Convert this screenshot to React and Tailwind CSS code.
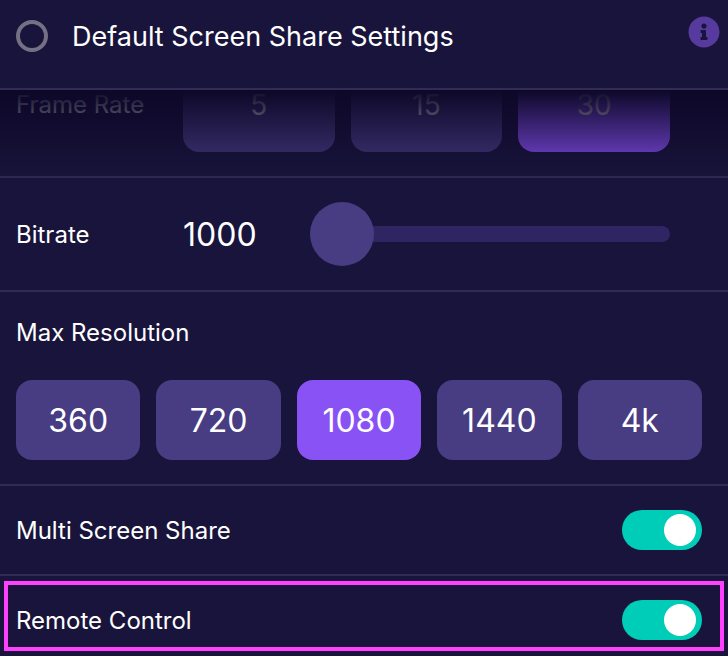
import { useState } from "react";
import { FaInfoCircle } from "react-icons/fa";

const labelText = "pt-0.5 text-[24px] leading-[30px]";

function Segment({ options, value, onChange, label, buttonClass, className }) {
  return (
    <div role="group" aria-label={label} className={`grid gap-4 ${className}`}>
      {options.map((option) => (
        <button
          key={option}
          type="button"
          aria-pressed={option === value}
          onClick={() => onChange(option)}
          className={`rounded-2xl pt-0.5 ${buttonClass} ${
            option === value ? "bg-[#8952f4]" : "bg-[#483c82]"
          }`}
        >
          {option}
        </button>
      ))}
    </div>
  );
}

function Toggle({ id, checked, onChange }) {
  return (
    <input
      id={id}
      type="checkbox"
      role="switch"
      checked={checked}
      onChange={(e) => onChange(e.target.checked)}
      className="flex h-10 w-20 shrink-0 appearance-none items-center rounded-full bg-[#483c82] px-1.5 before:h-8 before:w-8 before:rounded-full before:bg-white checked:justify-end checked:bg-[#00cdb7]"
    />
  );
}

export default function App() {
  const [frameRate, setFrameRate] = useState("30");
  const [bitrate, setBitrate] = useState(1000);
  const [resolution, setResolution] = useState("1080");
  const [multiShare, setMultiShare] = useState(true);
  const [remoteControl, setRemoteControl] = useState(true);

  return (
    <main className="min-h-screen overflow-hidden bg-[#19143b] font-['Inter',sans-serif] text-white">
      <header className="relative z-20 flex items-center border-b-2 border-[#322b54] bg-[#19143b] pt-4 pr-2 pb-8 pl-4">
        <input
          id="default-settings"
          type="radio"
          name="settings"
          className="mr-6 h-8 w-8 shrink-0 appearance-none rounded-full border-4 border-[#767084]"
        />
        <label htmlFor="default-settings" className="flex-1 pt-0.5 text-[27px] leading-[38px]">
          Default Screen Share Settings
        </label>
        <button type="button" aria-label="Information" className="self-start text-[#573a9d]">
          <FaInfoCircle className="h-8 w-8" />
        </button>
      </header>

      <div className="relative -mt-[58px]">
        {/* Shade cast by the header over the scrolled content */}
        <div className="pointer-events-none absolute inset-x-0 top-[58px] z-10 h-24 bg-linear-to-b from-[#0d0828] to-[#0d0828]/0" />

        <section className="flex items-center border-b-2 border-[#322b54] py-6 pr-[58px] pl-4">
          <h2 className={`w-[167px] shrink-0 ${labelText}`}>Frame Rate</h2>
          <Segment
            label="Frame Rate"
            options={["5", "15", "30"]}
            value={frameRate}
            onChange={setFrameRate}
            className="flex-1 grid-cols-3"
            buttonClass="h-24 text-[28px]"
          />
        </section>
      </div>

      <section className="flex items-center border-b-2 border-[#322b54] py-6 pr-[58px] pl-4">
        <label htmlFor="bitrate" className={`w-[167px] shrink-0 ${labelText}`}>
          Bitrate
        </label>
        <output htmlFor="bitrate" className="w-[127px] shrink-0 pt-0.5 text-[32px]">
          {bitrate}
        </output>
        <input
          id="bitrate"
          type="range"
          min="1000"
          max="5000"
          step="100"
          value={bitrate}
          onChange={(e) => setBitrate(Number(e.target.value))}
          className="h-16 min-w-0 flex-1 appearance-none bg-transparent [&::-webkit-slider-runnable-track]:h-4 [&::-webkit-slider-runnable-track]:rounded-full [&::-webkit-slider-runnable-track]:bg-[#2f2562] [&::-webkit-slider-thumb]:-mt-6 [&::-webkit-slider-thumb]:h-16 [&::-webkit-slider-thumb]:w-16 [&::-webkit-slider-thumb]:appearance-none [&::-webkit-slider-thumb]:rounded-full [&::-webkit-slider-thumb]:bg-[#483c82]"
        />
      </section>

      <section className="border-b-2 border-[#322b54] py-6 pr-[26px] pl-4">
        <h2 className={labelText}>Max Resolution</h2>
        <Segment
          label="Max Resolution"
          options={["360", "720", "1080", "1440", "4k"]}
          value={resolution}
          onChange={setResolution}
          className="mt-8 grid-cols-5"
          buttonClass="h-20 text-[32px]"
        />
      </section>

      <section className="flex items-center justify-between border-b-2 border-[#322b54] py-6 pr-[26px] pl-4">
        <label htmlFor="multi-share" className={labelText}>
          Multi Screen Share
        </label>
        <Toggle id="multi-share" checked={multiShare} onChange={setMultiShare} />
      </section>

      <section className="relative flex items-center justify-between pt-6 pr-[26px] pb-4 pl-4">
        <label htmlFor="remote-control" className={labelText}>
          Remote Control
        </label>
        <Toggle id="remote-control" checked={remoteControl} onChange={setRemoteControl} />
        <div className="pointer-events-none absolute inset-x-1 inset-y-[5px] border-4 border-[#ff40ff]" />
      </section>
    </main>
  );
}
